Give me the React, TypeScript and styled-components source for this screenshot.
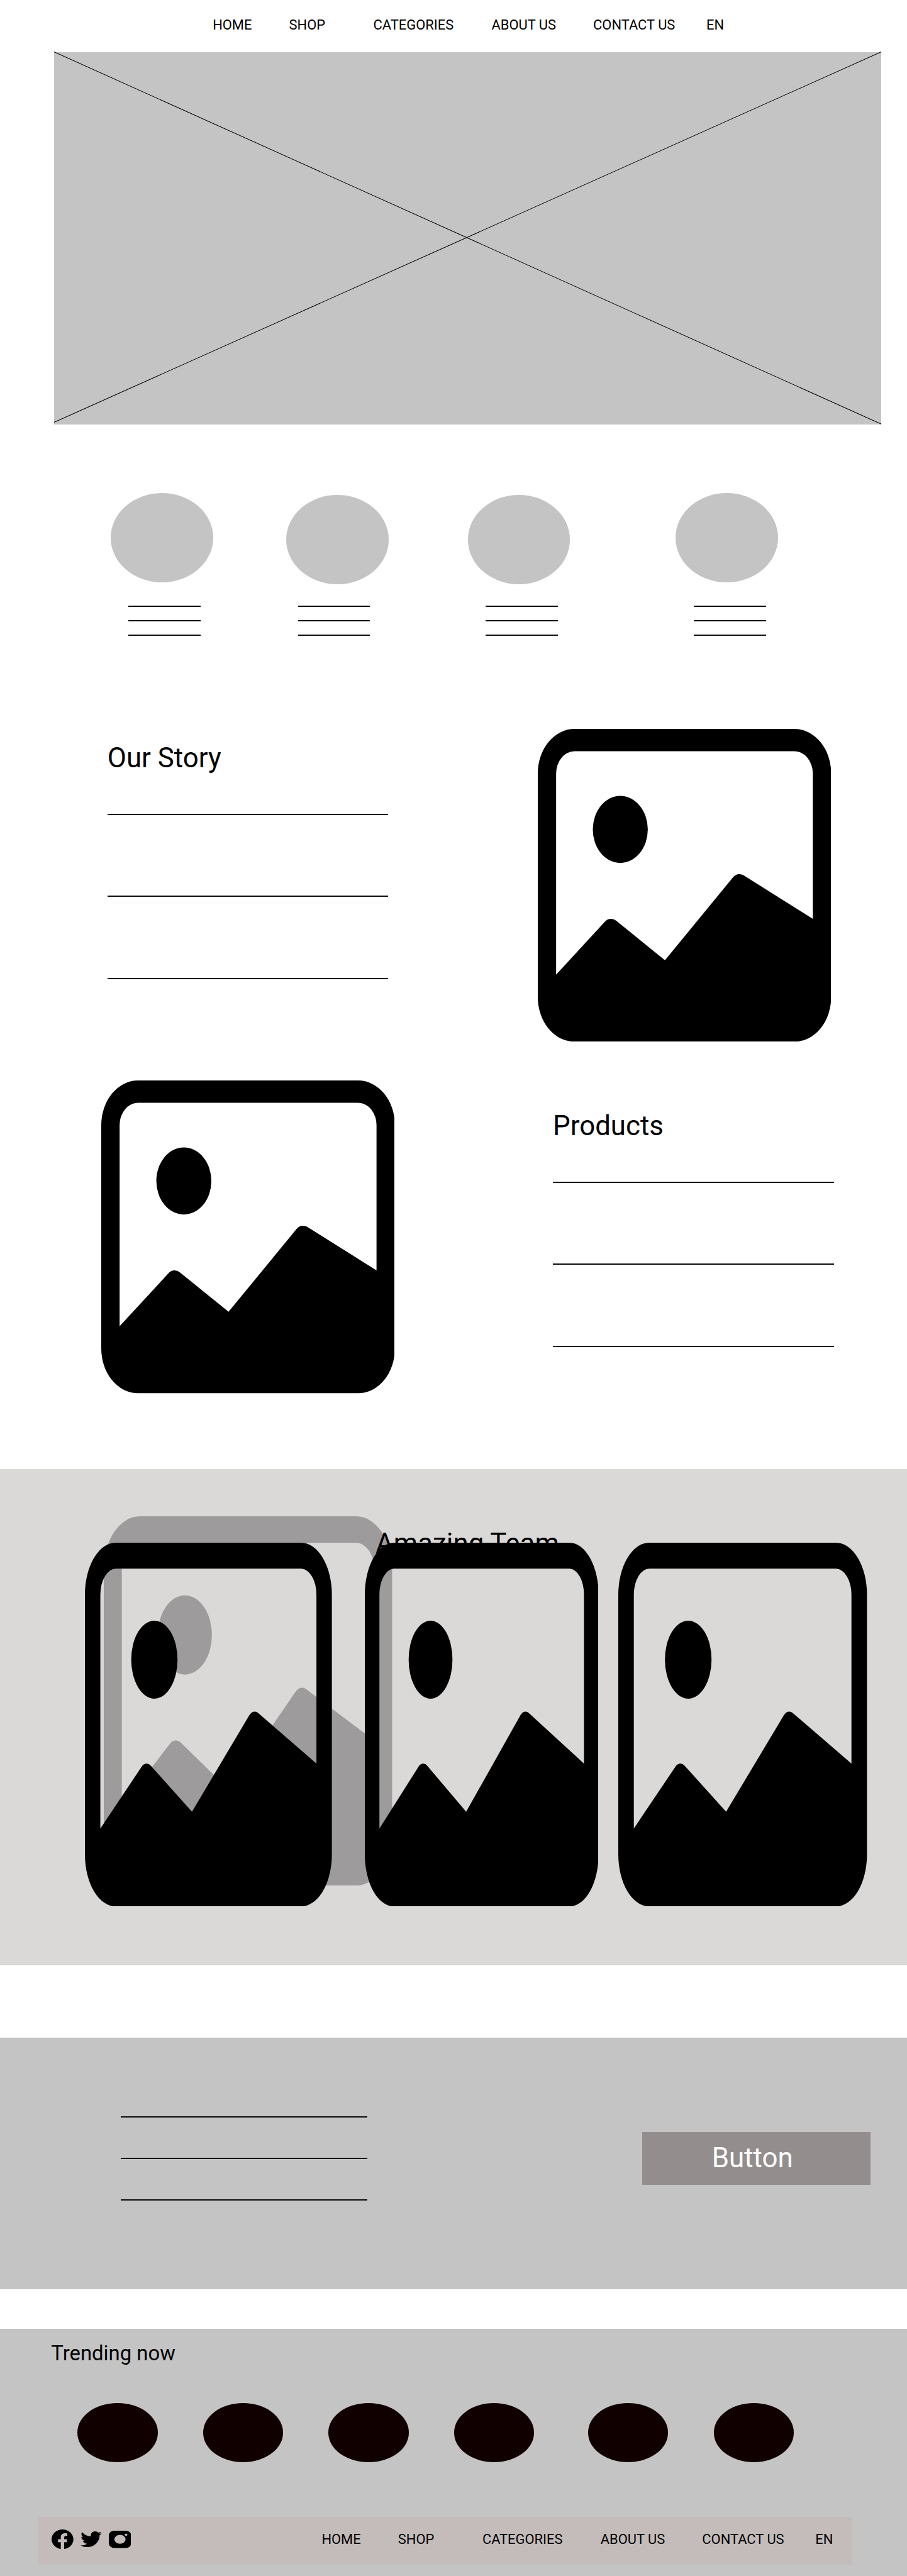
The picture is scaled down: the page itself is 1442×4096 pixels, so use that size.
import React from "react";
import styled, { createGlobalStyle } from "styled-components";

/* Design units to CSS pixels. */
const u = (n: number) => `${(n * 0.91315).toFixed(2)}px`;

const GlobalStyle = createGlobalStyle`
  * { box-sizing: border-box; }
  html, body { margin: 0; padding: 0; background: #ffffff; }
  body { font-family: Roboto, "Liberation Sans", sans-serif; color: #000000; overflow-x: hidden; }
`;

const Page = styled.div`
  display: flex;
  flex-direction: column;
  width: 100%;
  height: 4096px;
  overflow: hidden;
`;

const Header = styled.header`
  height: ${u(91)};
  padding: ${u(29.7)} 0 0 ${u(370.3)};
  flex: none;
`;

const NavList = styled.nav`
  display: grid;
  grid-template-columns: ${[133, 146.8, 205.7, 177, 197, 60].map(u).join(" ")};
  font-size: ${u(24)};
  line-height: ${u(28)};
  white-space: nowrap;
`;

const NavLink = styled.a`
  color: inherit;
  text-decoration: none;
`;

const Hero = styled.section`
  flex: none;
  width: ${u(1440)};
  height: ${u(648)};
  margin-left: ${u(94)};
  background: #c4c4c4;

  svg { display: block; width: 100%; height: 100%; overflow: visible; }
`;

const Features = styled.section`
  flex: none;
  display: grid;
  grid-template-columns: ${[305.2, 315.9, 362.3, 178].map(u).join(" ")};
  height: ${u(530)};
  padding: ${u(120)} 0 0 ${u(193.2)};
`;

const Feature = styled.div`
  display: flex;
  flex-direction: column;
`;

const FeatureDisc = styled.div<{ $drop: number }>`
  width: ${u(178)};
  height: ${u(155)};
  margin: ${(p) => u(p.$drop)} 0 ${(p) => u(40.2 - p.$drop)};
  border-radius: 50%;
  background: #c4c4c4;
`;

const LineStack = styled.div<{ $width: number; $pitch: number; $indent?: number }>`
  display: grid;
  grid-auto-rows: ${(p) => u(p.$pitch)};
  width: ${(p) => u(p.$width)};
  margin-left: ${(p) => u(p.$indent ?? 0)};
`;

const Line = styled.span`
  height: 2px;
  background: #0c0c0c;
`;

const StoryRow = styled.section<{ $left: number; $gap: number; $after: number }>`
  flex: none;
  display: flex;
  align-items: flex-start;
  gap: ${(p) => u(p.$gap)};
  height: ${u(544.6)};
  margin-bottom: ${(p) => u(p.$after)};
  padding-left: ${(p) => u(p.$left)};
`;

const StoryText = styled.div<{ $top: number }>`
  width: ${u(489)};
  padding-top: ${(p) => u(p.$top)};
`;

const Heading = styled.h2`
  margin: 0 0 ${u(69)};
  font-size: ${u(48)};
  line-height: ${u(56)};
  font-weight: 400;
  white-space: nowrap;
`;

const PictureSvg = styled.svg<{ $w: number; $h: number }>`
  display: block;
  flex: none;
  width: ${(p) => u(p.$w)};
  height: ${(p) => u(p.$h)};
`;

const Team = styled.section`
  flex: none;
  position: relative;
  height: ${u(864)};
  padding-top: ${u(101.6)};
  background: #dad9d7;
`;

const TeamGhost = styled.div`
  position: absolute;
  left: ${u(181)};
  top: ${u(82)};
  color: #9d9b9b;
`;

const TeamTitle = styled.h2`
  position: relative;
  height: ${u(26.4)};
  margin: 0 0 0 ${u(654)};
  font-size: ${u(48)};
  line-height: ${u(56)};
  font-weight: 400;
  white-space: nowrap;
`;

const TeamCards = styled.div`
  position: relative;
  display: grid;
  grid-template-columns: ${[487, 442, 433].map(u).join(" ")};
  padding-left: ${u(148)};
`;

const CallToAction = styled.section`
  flex: none;
  display: flex;
  justify-content: space-between;
  height: ${u(438)};
  margin: ${u(126)} 0 ${u(69)};
  padding: ${u(137.3)} ${u(63.4)} 0 ${u(210)};
  background: #c4c4c4;
`;

const ActionButton = styled.button`
  width: ${u(397.6)};
  height: ${u(91)};
  margin-top: ${u(27.7)};
  padding: 0 ${u(14)} 0 0;
  border: 0;
  background: #938e8d;
  color: #ffffff;
  font: 400 ${u(48)} / ${u(56)} Roboto, "Liberation Sans", sans-serif;
`;

const Footer = styled.footer`
  flex: 1 0 auto;
  padding-top: ${u(22.7)};
  background: #c4c4c4;
`;

const TrendingTitle = styled.h3`
  margin: 0 0 ${u(65)} ${u(89)};
  font-size: ${u(36)};
  line-height: ${u(42)};
  font-weight: 400;
`;

const TrendingRow = styled.div`
  display: grid;
  grid-template-columns: ${[218.5, 218.5, 218.5, 233.5, 218.7, 139.5].map(u).join(" ")};
  padding-left: ${u(135)};
`;

const TrendingDisc = styled.div`
  width: ${u(139.5)};
  height: ${u(102.3)};
  border-radius: 50%;
  background: #110000;
`;

const FooterBar = styled.div`
  display: flex;
  justify-content: space-between;
  width: ${u(1417)};
  height: ${u(83)};
  margin: ${u(96)} 0 0 ${u(67)};
  padding: ${u(22)} ${u(4.5)} 0 ${u(23)};
  background: #c3bcbb;
`;

const Social = styled.div`
  display: flex;
  align-items: center;
  height: ${u(34)};
  gap: ${u(12)};

  svg { display: block; }
  svg:nth-child(2) { margin-top: ${u(-1)}; }
`;

const FooterNav = styled.div`
  padding-top: ${u(2.8)};
`;

const LINKS = ["HOME", "SHOP", "CATEGORIES", "ABOUT US", "CONTACT US", "EN"];

const Nav = () => (
  <NavList>
    {LINKS.map((label) => (
      <NavLink key={label}>{label}</NavLink>
    ))}
  </NavList>
);

const Lines = (props: { width: number; pitch: number; indent?: number }) => (
  <LineStack $width={props.width} $pitch={props.pitch} $indent={props.indent}>
    <Line />
    <Line />
    <Line />
  </LineStack>
);

const Picture = ({ w, h }: { w: number; h: number }) => (
  <PictureSvg $w={w} $h={h} viewBox="0 1 16 14" preserveAspectRatio="none" fill="currentColor">
    <path d="M6 5.5a1.5 1.5 0 1 1-3 0 1.5 1.5 0 0 1 3 0z" />
    <path d="M2 1a2 2 0 0 0-2 2v10a2 2 0 0 0 2 2h12a2 2 0 0 0 2-2V3a2 2 0 0 0-2-2H2zm12 1a1 1 0 0 1 1 1v6.5l-3.777-1.947a.5.5 0 0 0-.577.093l-3.71 3.71-2.66-1.772a.5.5 0 0 0-.63.062L1 12V3a1 1 0 0 1 1-1h12z" />
  </PictureSvg>
);

const FEATURES = [
  { drop: 0, indent: 30.7 },
  { drop: 3, indent: 20.7 },
  { drop: 3, indent: 31.5 },
  { drop: 0, indent: 31.5 },
];

export default function App() {
  return (
    <>
      <GlobalStyle />
      <Page>
        <Header>
          <Nav />
        </Header>

        <Hero>
          <svg viewBox="0 0 1440 648" preserveAspectRatio="none" stroke="#000" strokeWidth="1.1">
            <line x1="0" y1="-0.5" x2="1440" y2="647.5" />
            <line x1="0" y1="644.5" x2="1440" y2="-0.5" />
          </svg>
        </Hero>

        <Features>
          {FEATURES.map((f, i) => (
            <Feature key={i}>
              <FeatureDisc $drop={f.drop} />
              <Lines width={125.4} pitch={25.2} indent={f.indent} />
            </Feature>
          ))}
        </Features>

        <StoryRow $left={187} $gap={260} $after={68.2}>
          <StoryText $top={23}>
            <Heading>Our Story</Heading>
            <Lines width={489} pitch={142.8} />
          </StoryText>
          <Picture w={510.8} h={544.6} />
        </StoryRow>

        <StoryRow $left={175.8} $gap={275.7} $after={131.6}>
          <Picture w={511.2} h={544.6} />
          <StoryText $top={50.8}>
            <Heading>Products</Heading>
            <Lines width={489} pitch={142.8} />
          </StoryText>
        </StoryRow>

        <Team>
          <TeamGhost>
            <Picture w={502} h={643} />
          </TeamGhost>
          <TeamTitle>Amazing Team</TeamTitle>
          <TeamCards>
            <Picture w={430} h={633.4} />
            <Picture w={407} h={633.4} />
            <Picture w={433} h={633.4} />
          </TeamCards>
        </Team>

        <CallToAction>
          <Lines width={429.6} pitch={72.1} />
          <ActionButton>Button</ActionButton>
        </CallToAction>

        <Footer>
          <TrendingTitle>Trending now</TrendingTitle>
          <TrendingRow>
            {[0, 1, 2, 3, 4, 5].map((i) => (
              <TrendingDisc key={i} />
            ))}
          </TrendingRow>
          <FooterBar>
            <Social>
              <svg width={u(38)} height={u(34)} viewBox="2 2.04 20 19.92" preserveAspectRatio="none">
                <path d="M12 2.04C6.5 2.04 2 6.53 2 12.06C2 17.06 5.66 21.21 10.44 21.96V14.96H7.9V12.06H10.44V9.85C10.44 7.34 11.93 5.96 14.22 5.96C15.31 5.96 16.45 6.15 16.45 6.15V8.62H15.19C13.95 8.62 13.56 9.39 13.56 10.18V12.06H16.34L15.89 14.96H13.56V21.96A10 10 0 0 0 22 12.06C22 6.53 17.5 2.04 12 2.04Z" />
              </svg>
              <svg width={u(37)} height={u(27.5)} viewBox="1.54 4 20.92 17" preserveAspectRatio="none">
                <path d="M22.46,6C21.69,6.35 20.86,6.58 20,6.69C20.88,6.16 21.56,5.32 21.88,4.31C21.05,4.81 20.13,5.16 19.16,5.36C18.37,4.5 17.26,4 16,4C13.65,4 11.73,5.92 11.73,8.29C11.73,8.63 11.77,8.96 11.84,9.27C8.28,9.09 5.11,7.38 3,4.79C2.63,5.42 2.42,6.16 2.42,6.94C2.42,8.43 3.17,9.75 4.33,10.5C3.62,10.5 2.96,10.3 2.38,10C2.38,12.11 3.86,13.85 5.82,14.24C5.46,14.34 5.08,14.39 4.69,14.39C4.42,14.39 4.15,14.36 3.89,14.31C4.43,16 6,17.26 7.89,17.29C6.43,18.45 4.58,19.13 2.56,19.13C2.22,19.13 1.88,19.11 1.54,19.07C3.44,20.29 5.7,21 8.12,21C16,21 20.33,14.46 20.33,8.79C20.33,8.6 20.33,8.42 20.32,8.23C21.16,7.63 21.88,6.87 22.46,6Z" />
              </svg>
              <svg width={u(39)} height={u(30)} viewBox="0 0 39 30" preserveAspectRatio="none">
                <path
                  fillRule="evenodd"
                  d="M11 0H28Q39 0 39 9V21Q39 30 28 30H11Q0 30 0 21V9Q0 0 11 0ZM9.6 15a9.8 7.8 0 1 0 19.6 0a9.8 7.8 0 1 0-19.6 0ZM27.6 7a2.4 1.9 0 1 0 4.8 0a2.4 1.9 0 1 0-4.8 0Z"
                />
              </svg>
            </Social>
            <FooterNav>
              <Nav />
            </FooterNav>
          </FooterBar>
        </Footer>
      </Page>
    </>
  );
}
